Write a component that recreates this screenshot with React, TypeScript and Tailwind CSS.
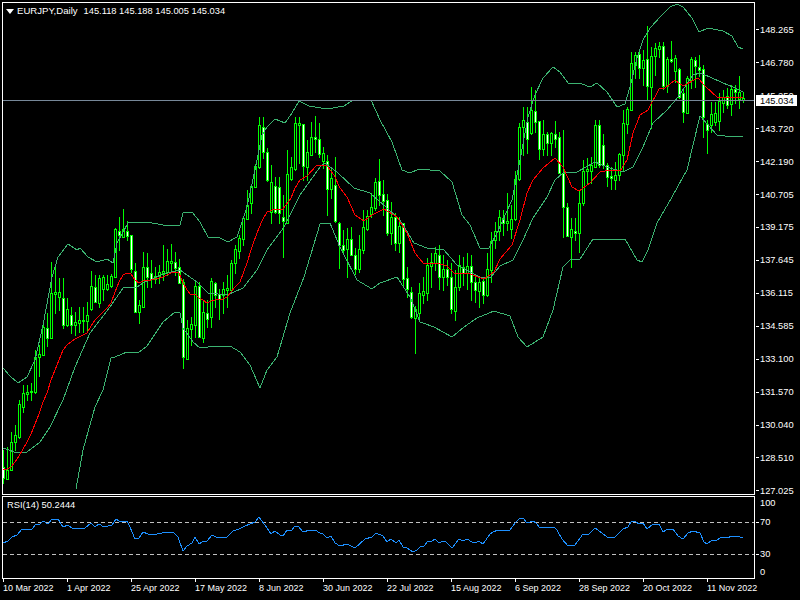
const font = "font-['Liberation_Sans',sans-serif] whitespace-nowrap leading-3"

// hi, lo, body top, body bottom, bear (screen y, one candle every 4px from x=3)
const candles = [
  [450,483,467,478,1],[447,479,470,479,0],[432,470,442,470,0],[425,450,435,442,0],[400,438,404,437,0],[385,412,393,407,0],[385,400,392,394,0],[383,400,391,392,0],
  [350,393,357,392,0],[345,376,354,357,0],[325,355,327,355,0],[313,346,328,338,1],[262,338,293,338,0],[267,313,292,294,0],[278,310,292,297,0],[278,328,298,325,1],
  [298,326,309,325,0],[307,333,315,325,1],[312,335,322,325,0],[307,332,320,323,0],[307,332,320,321,0],[302,332,315,321,0],[271,310,286,309,0],[275,302,287,302,1],
  [275,307,278,303,0],[275,300,277,289,0],[275,290,284,289,0],[274,287,276,286,0],[228,277,229,277,0],[217,250,231,235,1],[209,237,229,237,0],[221,240,231,236,1],
  [235,272,235,269,1],[263,312,271,312,1],[300,323,305,312,0],[252,307,267,307,0],[253,287,267,277,1],[260,287,273,279,1],[267,283,276,279,0],[265,283,272,276,0],
  [245,280,271,274,0],[249,275,261,272,0],[244,272,261,263,0],[252,275,262,268,1],[259,283,267,283,1],[279,368,282,357,1],[320,359,328,359,0],[317,345,324,329,0],
  [280,337,286,325,0],[282,337,286,337,1],[300,342,312,338,0],[300,327,313,319,1],[278,327,281,317,0],[282,307,283,295,1],[289,319,294,299,1],[282,313,289,295,0],
  [275,307,288,290,0],[260,291,263,290,0],[245,273,249,263,0],[235,258,238,251,0],[217,245,218,239,0],[190,219,205,219,0],[186,213,186,203,0],[164,187,166,187,0],
  [117,168,125,167,0],[117,158,127,152,1],[148,181,152,180,1],[165,223,182,212,0],[177,213,186,212,1],[177,223,187,213,1],[195,257,217,221,1],[150,223,174,223,0],
  [157,180,167,179,0],[117,170,123,169,0],[117,163,123,125,0],[124,180,124,166,1],[140,180,152,167,0],[122,155,137,155,0],[116,152,137,139,1],[123,157,139,154,1],
  [147,168,153,161,0],[155,215,161,189,1],[168,198,178,189,0],[157,222,185,221,1],[222,268,223,245,1],[230,253,245,250,1],[228,277,239,249,0],[227,255,239,255,1],
  [248,274,255,269,1],[235,272,249,269,0],[210,253,227,250,0],[210,230,216,229,0],[193,217,207,214,0],[178,210,182,208,0],[159,205,181,195,1],[180,215,194,201,1],
  [194,235,200,233,1],[202,244,217,233,0],[213,250,217,243,1],[217,252,226,243,0],[223,287,223,279,1],[267,297,278,289,1],[287,318,292,317,1],[306,353,309,318,0],
  [283,320,293,313,0],[277,303,291,295,0],[258,300,265,293,0],[253,287,262,266,0],[247,270,253,263,0],[245,289,255,277,1],[255,290,269,277,0],[260,285,269,277,1],
  [263,313,277,309,1],[270,320,287,311,0],[255,290,265,287,0],[257,285,267,273,1],[253,289,266,273,0],[255,300,266,282,1],[275,302,282,290,1],[277,307,282,291,0],
  [277,303,281,295,1],[253,296,269,295,0],[232,282,241,270,0],[222,248,231,240,0],[210,240,217,231,0],[210,235,218,223,1],[193,230,221,223,0],[205,238,219,229,0],
  [171,220,179,219,0],[123,180,127,179,0],[107,155,120,127,0],[107,153,122,139,1],[87,134,110,133,0],[90,132,111,122,1],[121,159,121,149,1],[120,155,134,149,0],
  [132,155,134,143,1],[132,155,133,143,0],[121,147,134,139,1],[132,173,137,173,1],[130,237,173,207,1],[203,236,207,236,1],[218,267,229,237,0],[218,240,231,233,1],
  [190,252,203,233,0],[160,205,171,203,0],[158,183,169,171,0],[157,183,165,171,0],[120,167,125,167,0],[120,167,125,165,1],[134,168,145,165,1],[163,186,165,177,1],
  [167,189,176,178,1],[162,189,175,180,0],[153,180,154,175,0],[110,170,123,155,0],[107,133,109,124,0],[52,110,63,110,0],[52,78,55,65,0],[52,78,54,68,1],
  [50,85,60,68,0],[26,100,59,86,1],[47,128,56,87,0],[43,75,48,56,0],[42,57,46,49,0],[42,89,46,86,1],[57,92,59,86,0],[41,62,59,61,1],[55,82,58,71,0],[68,98,69,97,1],
  [90,122,93,112,1],[76,113,78,113,0],[57,88,59,80,0],[57,87,60,66,1],[55,76,67,70,1],[65,137,69,117,1],[120,153,124,130,1],[102,132,114,125,0],[102,125,113,122,0],
  [93,130,101,121,0],[90,112,97,103,0],[88,108,96,105,1],[85,115,89,104,0],[85,103,89,92,1],[76,108,92,99,0],[92,102,98,100,0],
]

const ma = "3,469 7,469 11,467 15,462 19,456 23,449 27,442 31,434 35,424 39,414 43,402 47,393 51,380 55,370 59,360 63,350 67,345 71,342 75,339 79,337 83,335 87,333 91,326 95,320 99,316 103,312 107,308 111,303 115,292 119,282 123,275 127,273 131,274 135,280 139,283 143,281 147,280 151,280 155,279 159,278 163,277 167,275 171,273 175,272 179,273 183,283 187,290 191,295 195,294 199,298 203,300 207,303 211,301 215,300 219,299 223,299 227,297 231,292 235,287 240,282 247,263 252,247 257,233 262,221 267,212 275,209 283,209 291,198 295,188 300,180 307,176 317,165 327,166 334,175 340,188 347,197 355,215 364,221 372,215 384,209 397,217 407,233 415,253 424,264 437,263 447,266 455,274 467,273 484,279 494,272 500,259 512,245 520,220 527,193 533,180 543,168 555,158 563,167 572,187 579,191 590,183 600,172 610,170 620,171 627,160 633,133 640,115 648,110 659,89 665,88 675,80 683,86 698,78 705,86 718,98 728,97 743,97"
const bandUpper = "3,368 10,376 18,383 27,377 35,360 43,325 52,277 58,257 68,244 77,250 80,248 88,257 97,262 107,259 113,263 117,243 128,223 147,222 163,225 180,225 183,213 192,212 200,222 208,237 220,238 228,242 237,237 242,222 247,207 255,170 262,135 267,127 275,119 285,123 292,113 299,101 309,106 327,109 344,106 353,100 371,100 380,120 392,142 402,170 410,173 419,169 440,171 452,182 462,215 470,225 480,248 489,248 497,233 512,200 520,160 528,117 535,95 543,78 553,67 560,72 568,83 582,84 590,87 597,83 607,92 617,107 625,104 630,87 637,58 643,40 650,28 662,15 670,7 677,4 683,7 692,18 699,32 708,28 723,31 732,36 738,47 743,49"
const bandMiddle = "3,448 17,453 27,452 40,442 50,427 63,400 75,367 90,333 110,307 123,288 137,287 143,283 163,274 180,270 197,282 208,293 227,295 243,288 257,270 267,250 284,227 300,195 320,167 325,163 337,172 354,188 370,193 387,208 400,220 414,243 427,248 444,250 457,265 480,277 490,278 500,266 513,260 523,240 533,218 547,197 555,180 563,173 577,172 595,162 607,167 623,172 633,167 643,147 653,123 667,110 678,97 693,75 700,73 710,77 723,83 733,87 743,92"
const bandLower = "76,489 83,450 95,407 103,390 111,358 115,357 127,352 138,353 147,346 163,322 175,312 180,313 183,328 193,342 200,348 217,346 230,346 240,352 250,365 260,388 267,370 277,357 290,313 304,277 320,224 330,223 340,247 357,280 372,289 380,283 397,277 410,297 420,322 434,327 452,337 464,327 477,318 494,311 510,316 518,337 527,347 543,337 553,310 563,267 570,260 580,259 593,239 607,240 625,239 637,260 642,262 648,250 657,223 672,197 683,177 687,170 700,116 708,125 717,135 733,137 743,136"
const rsi = "3,543 8,541 12,537 17,535 22,529 32,529 36,524 40,524 43,521 48,524 52,519 58,519 63,527 68,525 73,529 85,528 91,523 95,527 99,524 104,527 112,525 116,519 119,521 127,521 130,527 135,539 139,538 143,532 148,534 157,534 167,532 173,532 178,537 183,551 187,546 192,543 195,537 199,544 204,541 207,541 212,535 218,538 223,537 227,537 233,531 239,529 245,526 255,522 259,517 265,525 271,534 275,531 280,535 283,536 287,530 292,530 295,526 298,526 303,532 310,530 315,530 320,533 323,534 327,538 331,536 335,543 340,546 347,544 355,548 365,539 372,537 376,533 383,536 387,542 391,539 396,543 399,540 403,547 407,548 413,552 417,550 420,547 424,546 428,541 432,541 435,539 439,543 443,541 446,542 452,548 459,539 463,541 467,539 472,542 475,543 479,541 483,544 490,534 493,532 498,530 503,531 510,530 515,523 519,519 523,518 527,523 533,521 536,523 540,528 545,527 548,528 554,527 557,530 562,539 568,546 575,545 583,534 589,534 595,528 602,533 607,537 615,537 623,529 628,527 631,522 635,521 639,524 643,523 647,529 653,524 659,524 663,532 668,529 673,529 678,536 683,539 688,533 693,531 700,533 704,542 707,544 712,540 715,541 722,537 727,538 732,536 737,536 743,538"

const prices = ['148.265', '146.780', '145.250', '143.720', '142.190', '140.705', '139.175', '137.645', '136.115', '134.585', '133.100', '131.570', '130.040', '128.510', '127.025']
const dates = ['10 Mar 2022', '1 Apr 2022', '25 Apr 2022', '17 May 2022', '8 Jun 2022', '30 Jun 2022', '22 Jul 2022', '15 Aug 2022', '6 Sep 2022', '28 Sep 2022', '20 Oct 2022', '11 Nov 2022']

function PriceChart() {
  return (
    <svg width="751" height="491" viewBox="3 3 751 491" shapeRendering="crispEdges" className="block">
      {candles.map(([hi, lo, top, bot, bear], i) => {
        const x = 3 + i * 4
        return (
          <g key={i}>
            <rect x={x} y={hi} width="1" height={lo - hi + 1} fill="#00ff00" />
            <rect x={x - 1} y={top} width="3" height={bot - top + 1} fill="#00ff00" />
            {bot - top > 1 && <rect x={x} y={top + 1} width="1" height={bot - top - 1} fill={bear ? '#ffffff' : '#000000'} />}
          </g>
        )
      })}
      <polyline points={bandUpper} fill="none" stroke="#3cb371" />
      <polyline points={bandMiddle} fill="none" stroke="#3cb371" />
      <polyline points={bandLower} fill="none" stroke="#3cb371" />
      <polyline points={ma} fill="none" stroke="#ff0000" />
      <rect x="3" y="100" width="751" height="1" fill="#778899" />
    </svg>
  )
}

function RsiChart() {
  return (
    <svg width="751" height="81" viewBox="3 497 751 81" shapeRendering="crispEdges" className="block">
      <line x1="3" y1="522.5" x2="754" y2="522.5" stroke="#c0c0c0" strokeDasharray="4 3" />
      <line x1="3" y1="554.5" x2="754" y2="554.5" stroke="#c0c0c0" strokeDasharray="4 3" />
      <polyline points={rsi} fill="none" stroke="#1e90ff" />
    </svg>
  )
}

function RsiLabel({ text, tick, className }: { text: string; tick?: boolean; className: string }) {
  return (
    <div className={`flex items-center h-3 ${className}`}>
      <div className={tick ? 'ml-px w-[3px] h-px bg-white' : 'ml-px w-[3px] h-px'} />
      <span className={`ml-px text-[9.3px] text-white ${font}`}>{text}</span>
    </div>
  )
}

export default function App() {
  return (
    <div className="w-[800px] h-[600px] bg-black overflow-hidden pl-[2px] pt-[2px]">
      <div className="flex h-[493px]">
        {/* price chart */}
        <div className="relative w-[753px] h-[493px] border border-white shrink-0">
          <PriceChart />
          <div className="absolute left-[3px] top-[2px] flex items-center">
            <svg width="8" height="5" viewBox="0 0 8 5" className="block">
              <polygon points="0,0 8,0 4,5" fill="#ffffff" />
            </svg>
            <span className={`ml-[3px] text-[9.6px] text-white ${font}`}>EURJPY,Daily</span>
            <span className={`ml-[6px] text-[9.3px] text-white ${font}`}>145.118 145.188 145.005 145.034</span>
          </div>
        </div>
        <div className="relative pt-[11.5px]">
          {prices.map((p) => (
            <div key={p} className="flex items-center h-[32.93px]">
              <div className="ml-px w-[3px] h-px bg-white" />
              <span className={`ml-px text-[9.3px] text-white ${font}`}>{p}</span>
            </div>
          ))}
          <div className="absolute left-px top-[93px] w-[41px] h-[11px] bg-white flex items-center pl-1">
            <span className={`text-[9.3px] text-black ${font}`}>145.034</span>
          </div>
        </div>
      </div>

      {/* RSI */}
      <div className="flex mt-px">
        <div className="relative w-[753px] h-[83px] border border-white shrink-0">
          <RsiChart />
          <div className={`absolute left-[4px] top-[2px] text-[9.3px] text-white ${font}`}>RSI(14) 50.2444</div>
        </div>
        <div className="flex flex-col">
          <RsiLabel text="100" className="mt-px" />
          <RsiLabel text="70" tick className="mt-[7px]" />
          <RsiLabel text="30" tick className="mt-5" />
          <RsiLabel text="0" className="mt-[6px]" />
        </div>
      </div>

      {/* time axis */}
      <div className="flex pl-px">
        {dates.map((d) => (
          <div key={d} className="w-16 shrink-0">
            <div className="w-px h-[3px] bg-white" />
            <div className={`text-[9px] text-white ${font}`}>{d}</div>
          </div>
        ))}
      </div>
    </div>
  )
}
